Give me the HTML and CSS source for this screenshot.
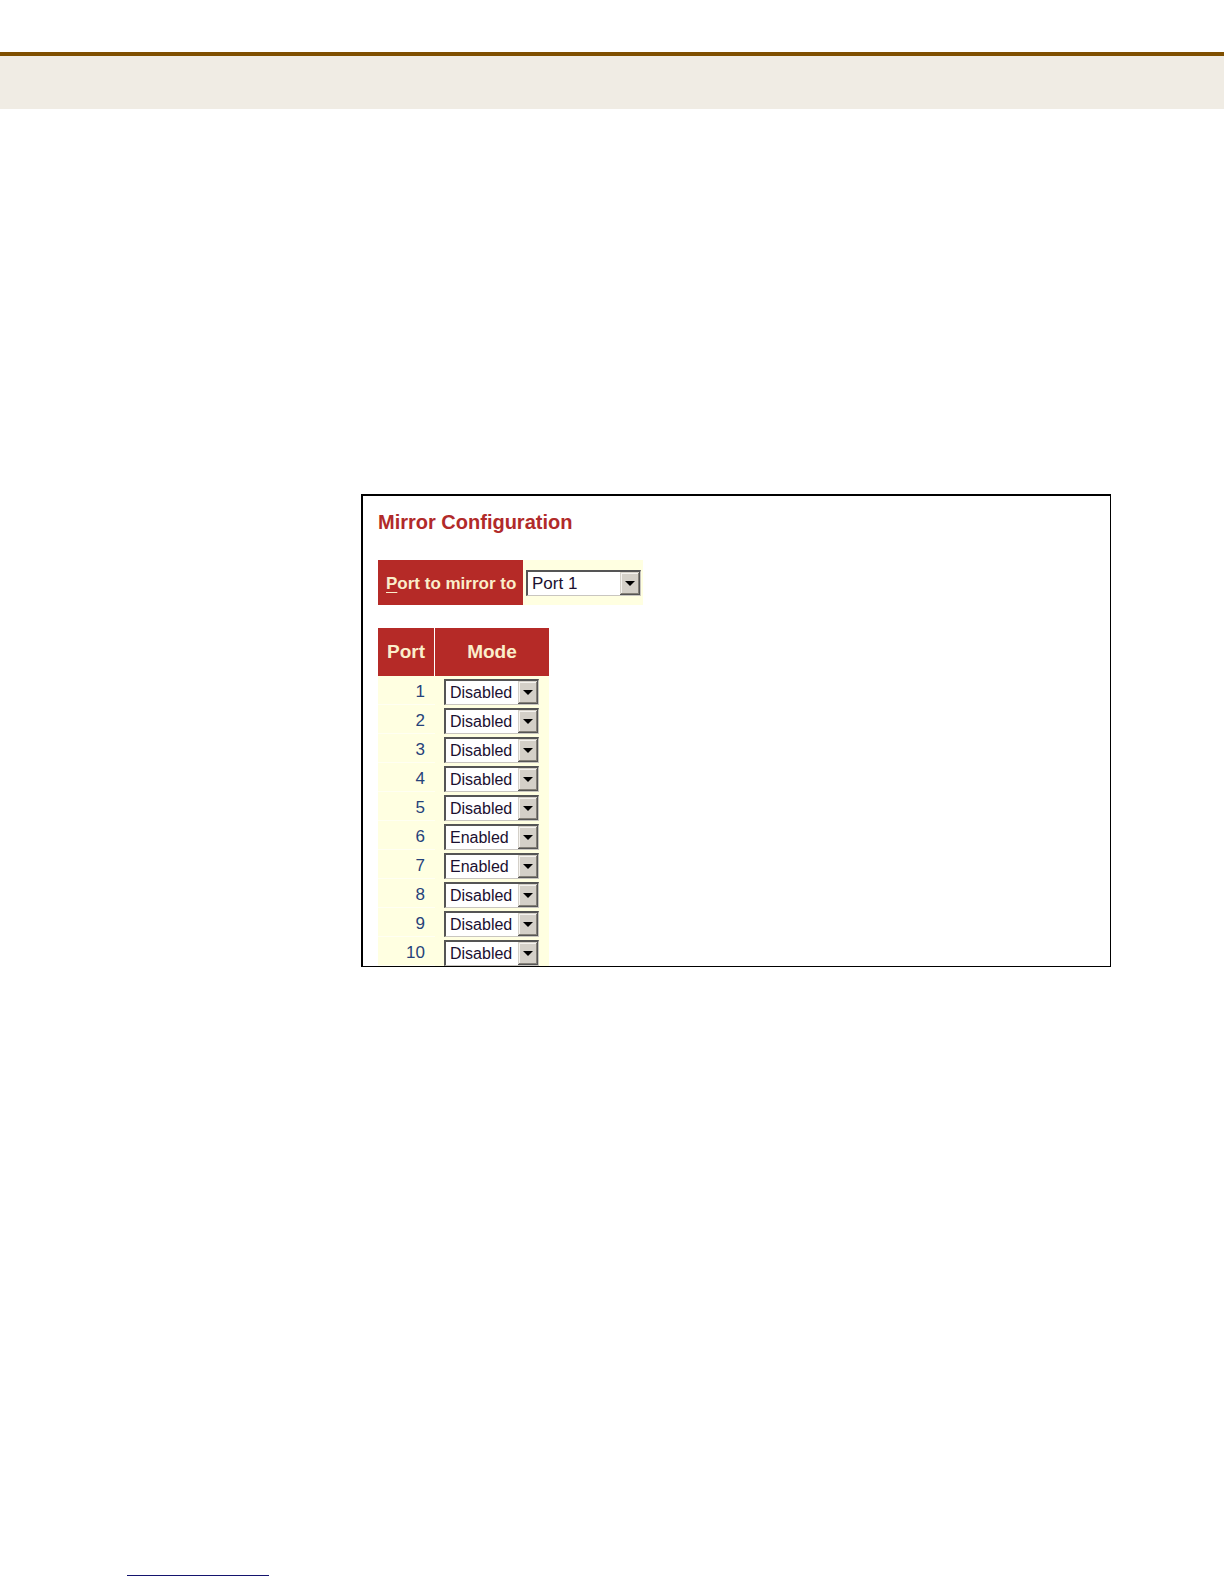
FILE: index.html
```html
<!DOCTYPE html>
<html lang="en">
<head>
<meta charset="utf-8">
<title>Mirror Configuration</title>
<link rel="stylesheet" href="styles.css">
</head>
<body>
<header class="banner"></header>
<main class="content">
  <section class="panel">
    <h1 class="title">Mirror Configuration</h1>
    <div class="target">
      <label class="target-label" for="target"><span><u>P</u>ort to mirror to</span></label>
      <div class="target-field">
        <select class="select" id="target"><option>Port 1</option></select>
      </div>
    </div>
    <table class="ports">
      <thead><tr><th class="port" scope="col">Port</th><th class="mode" scope="col">Mode</th></tr></thead>
      <tbody>
        <tr><td class="port"><label for="p1">1</label></td><td class="mode"><select class="select" id="p1"><option>Disabled</option><option>Enabled</option></select></td></tr>
        <tr><td class="port"><label for="p2">2</label></td><td class="mode"><select class="select" id="p2"><option>Disabled</option><option>Enabled</option></select></td></tr>
        <tr><td class="port"><label for="p3">3</label></td><td class="mode"><select class="select" id="p3"><option>Disabled</option><option>Enabled</option></select></td></tr>
        <tr><td class="port"><label for="p4">4</label></td><td class="mode"><select class="select" id="p4"><option>Disabled</option><option>Enabled</option></select></td></tr>
        <tr><td class="port"><label for="p5">5</label></td><td class="mode"><select class="select" id="p5"><option>Disabled</option><option>Enabled</option></select></td></tr>
        <tr><td class="port"><label for="p6">6</label></td><td class="mode"><select class="select" id="p6"><option>Disabled</option><option selected>Enabled</option></select></td></tr>
        <tr><td class="port"><label for="p7">7</label></td><td class="mode"><select class="select" id="p7"><option>Disabled</option><option selected>Enabled</option></select></td></tr>
        <tr><td class="port"><label for="p8">8</label></td><td class="mode"><select class="select" id="p8"><option>Disabled</option><option>Enabled</option></select></td></tr>
        <tr><td class="port"><label for="p9">9</label></td><td class="mode"><select class="select" id="p9"><option>Disabled</option><option>Enabled</option></select></td></tr>
        <tr><td class="port"><label for="p10">10</label></td><td class="mode"><select class="select" id="p10"><option>Disabled</option><option>Enabled</option></select></td></tr>
      </tbody>
    </table>
  </section>
</main>
<footer class="footer"><hr class="footer-rule"></footer>
</body>
</html>
```
FILE: styles.css
```css
* {
  box-sizing: border-box;
}

body {
  margin: 0;
  min-height: 100vh;
  display: flex;
  flex-direction: column;
  background: #fff;
  font-family: "Liberation Sans", Arial, sans-serif;
}

.banner {
  height: 57px;
  margin-top: 52px;
  border-top: 4px solid #7f4f00;
  background: #f0ece4;
}

.content {
  padding: 385px 113px 0 361px;
}

.panel {
  padding: 14px 15px 0;
  border: solid #000;
  border-width: 2px 1px 1px 2px;
}

.title {
  margin: 0 0 26px;
  font-size: 20px;
  line-height: 24px;
  color: #b12a2a;
}

.target {
  display: flex;
  height: 45px;
  margin-bottom: 23px;
}

.target-label,
.target-field {
  display: flex;
  align-items: center;
}

.target-label {
  width: 145px;
  padding: 2px 0 0 8px;
  background: #b52a27;
  color: #fbeecb;
  font-size: 17px;
  font-weight: bold;
  white-space: nowrap;
}

.target-label u {
  text-underline-offset: 3px;
}

.target-field {
  padding: 0 2px 0 3px;
  background: #ffffe1;
}

.target-field .select {
  width: 115px;
  padding-left: 4px;
  font-size: 17px;
}

.ports {
  width: 171px;
  table-layout: fixed;
  border-collapse: separate;
  border-spacing: 0;
}

.ports th {
  height: 48px;
  padding: 0;
  background: #b52a27;
  color: #fbeecb;
  font-size: 19px;
  text-align: center;
}

.ports th.port {
  width: 57px;
  border-right: 1px solid #fff;
}

.ports td {
  height: 29px;
  padding: 2px 0 0;
  background: #ffffe1;
}

.ports td.port {
  padding: 4px 10px 0 0;
  border-bottom: 1px solid #fffff2;
  color: #26427a;
  font-size: 17px;
  line-height: 20px;
  text-align: right;
}

.ports td.mode {
  padding-left: 9px;
}

.select {
  display: block;
  width: 95px;
  height: 26px;
  margin: 0;
  padding: 1px 0 0 4px;
  appearance: none;
  border: solid;
  border-width: 2px 1px 1px 2px;
  border-color: #555 #c9c6c0 #c9c6c0 #555;
  border-radius: 0;
  background: #fff url("data:image/svg+xml,%3Csvg xmlns='http://www.w3.org/2000/svg' width='20' height='23'%3E%3Cpath fill='%23d4d0c8' d='M0 0h20v23H0z'/%3E%3Cpath fill='%23f4f2ee' d='M1 1h17v1H2v19H1z'/%3E%3Cpath fill='%23858179' d='M18 1h1v21H1v-1h17z'/%3E%3Cpath fill='%23555' d='M19 0h1v23H0v-1h19z'/%3E%3Cpath d='M5 9h10l-5 5z'/%3E%3C/svg%3E") right center no-repeat;
  color: #1b1030;
  font-family: inherit;
  font-size: 16px;
}

.footer {
  margin-top: auto;
  padding: 0 0 8px 127px;
}

.footer-rule {
  width: 142px;
  height: 1px;
  margin: 0;
  border: 0;
  background: #14146e;
}
```
